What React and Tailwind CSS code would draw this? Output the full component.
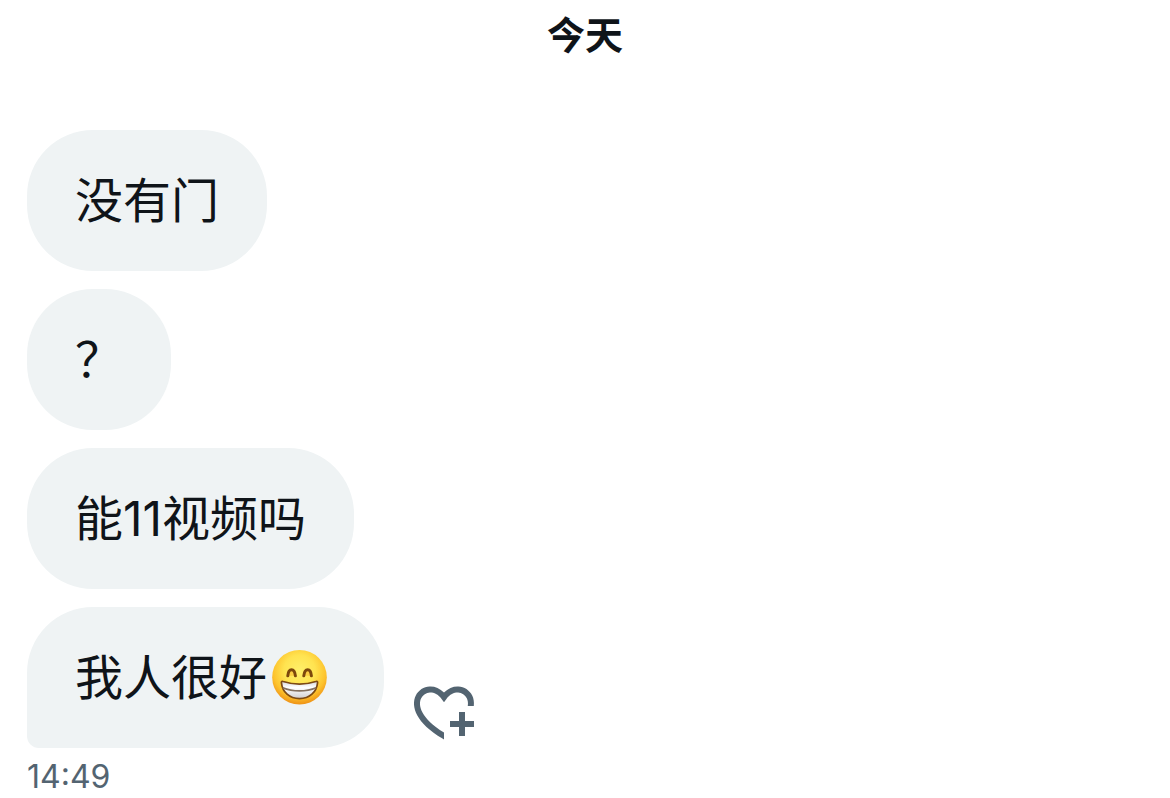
import React from "react"

const messages = [
  { id: 1, text: "没有门" },
  { id: 2, text: "？" },
  { id: 3, text: "能11视频吗" },
  { id: 4, text: "我人很好", emoji: true },
]

function GrinEmoji() {
  return (
    <svg viewBox="0 0 56 56" className="mr-2 ml-[5px] h-14 w-14" role="img" aria-label="grinning face">
      <defs>
        <radialGradient id="face" cx="0.5" cy="0.38" r="0.64">
          <stop offset="0" stopColor="#fff06a" />
          <stop offset="0.45" stopColor="#ffe350" />
          <stop offset="0.75" stopColor="#fdc32d" />
          <stop offset="1" stopColor="#ec8a12" />
        </radialGradient>
        <linearGradient id="teeth" x1="0" y1="0" x2="0" y2="1">
          <stop offset="0" stopColor="#d5d5db" />
          <stop offset="0.35" stopColor="#ffffff" />
          <stop offset="1" stopColor="#cfcdd0" />
        </linearGradient>
      </defs>
      <circle cx="27.5" cy="27.3" r="27.3" fill="url(#face)" />
      <g fill="#f9b32a" stroke="#7d480c" strokeWidth="3" strokeLinecap="round">
        <path d="M15.8 25.8c.6-8.2 6.8-8.2 7.6 0" fillOpacity="0.5" />
        <path d="M31.8 25.8c.8-8.2 7-8.2 7.6 0" fillOpacity="0.5" />
      </g>
      <path
        d="M9.4 32.6c-.1-1.1.7-1.5 1.8-1.1 10.4 3.4 22.2 3.4 32.6 0 1.1-.4 1.9 0 1.8 1.1-1 9.6-8 16-18.1 16s-17.1-6.4-18.1-16z"
        fill="url(#teeth)"
        stroke="#7d4a14"
        strokeWidth="1.7"
      />
      <path d="M10.8 37.8c10 4.2 23.4 4.2 33.4 0" fill="none" stroke="#84705f" strokeWidth="1.7" />
    </svg>
  )
}

function HeartPlus() {
  return (
    <svg viewBox="0 0 24 24" className="h-[72px] w-[72px]" fill="currentColor" aria-hidden="true">
      <path d="M17 12v3h-2.998v2h3v3h2v-3h3v-2h-3.001v-3H17zm-5 6.839c-3.871-2.34-6.053-4.639-7.127-6.609-1.112-2.04-1.031-3.7-.479-4.82.561-1.13 1.667-1.84 2.91-1.91 1.222-.06 2.68.51 3.892 2.16l.806 1.09.805-1.09c1.211-1.65 2.668-2.22 3.89-2.16 1.242.07 2.347.78 2.908 1.91.334.677.49 1.554.321 2.59h2.011c.153-1.283-.039-2.469-.539-3.48-.887-1.79-2.647-2.91-4.601-3.01-1.65-.09-3.367.56-4.796 2.01-1.43-1.45-3.147-2.1-4.798-2.01-1.954.1-3.714 1.22-4.601 3.01-.896 1.81-.846 4.17.514 6.67 1.353 2.48 4.003 5.12 8.382 7.67l.502.299v-2.32z" />
    </svg>
  )
}

function App() {
  return (
    <main
      lang="zh-CN"
      className="min-h-screen bg-white px-[27px] pt-2 font-['Inter','Noto_Sans_CJK_SC',sans-serif] text-[#0f1419]"
    >
      <h1 className="text-center text-[38px] leading-[54px] font-bold">今天</h1>

      <ul className="mt-[68px] space-y-[18px]">
        {messages.map((message, index) => {
          const last = index === messages.length - 1
          return (
            <li key={message.id} className="flex items-end gap-6">
              <div
                className={`flex items-center rounded-[66px] bg-[#eff3f4] px-12 py-9 text-[48px] leading-[69px] ${
                  last ? "rounded-bl-xl" : ""
                }`}
              >
                {message.text}
                {message.emoji && <GrinEmoji />}
              </div>
              {last && (
                <button type="button" aria-label="Add reaction" className="cursor-pointer text-[#536471]">
                  <HeartPlus />
                </button>
              )}
            </li>
          )
        })}
      </ul>

      <time dateTime="14:49" className="mt-2 block text-[32px] leading-[42px] text-[#536471]">
        14:49
      </time>
    </main>
  )
}

export default App
